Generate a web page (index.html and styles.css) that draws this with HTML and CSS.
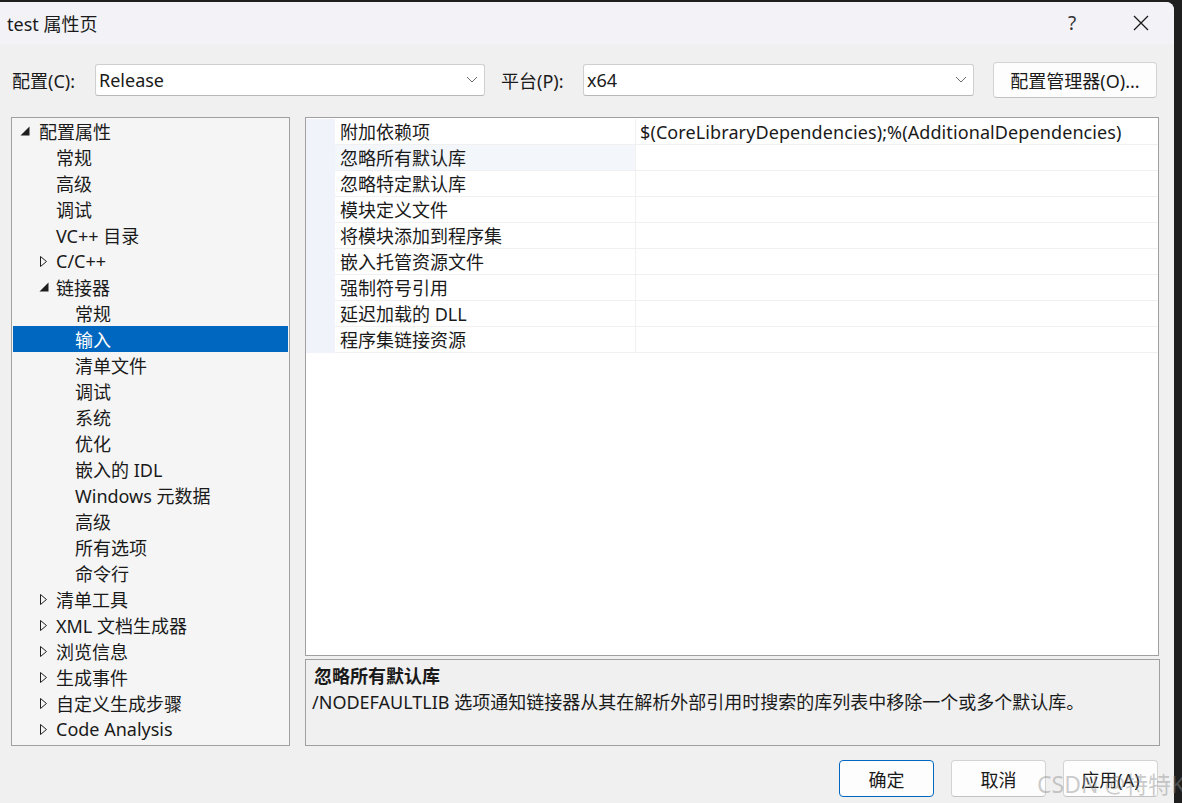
FILE: index.html
```html
<!DOCTYPE html>
<html lang="zh-CN">
<head>
    <meta charset="UTF-8">
    <meta name="viewport" content="width=device-width, initial-scale=1.0">
    <title>test 属性页</title>
    <link rel="stylesheet" href="styles.css">
</head>
<body>

<div class="window">

    <div class="titlebar">
        <span class="title">test 属性页</span>
        <span class="help">?</span>
        <span class="close">
            <svg width="16" height="16" viewBox="0 0 16 16"><path d="M1 1 L15 15 M15 1 L1 15" stroke="#1b1b1b" stroke-width="1.3" fill="none"/></svg>
        </span>
    </div>

    <div class="toolbar">
        <label class="lbl">配置(C):</label>
        <div class="combo combo-config">
            <span>Release</span>
            <svg class="chev" width="12" height="7" viewBox="0 0 12 7"><path d="M1 1 L6 6 L11 1" stroke="#6b6b6b" stroke-width="1" fill="none"/></svg>
        </div>
        <label class="lbl lbl-platform">平台(P):</label>
        <div class="combo combo-platform">
            <span>x64</span>
            <svg class="chev" width="12" height="7" viewBox="0 0 12 7"><path d="M1 1 L6 6 L11 1" stroke="#6b6b6b" stroke-width="1" fill="none"/></svg>
        </div>
        <button class="btn btn-manager">配置管理器(O)...</button>
    </div>

    <div class="main">
        <div class="tree">
            <div class="node l1"><span class="tw"><svg width="10" height="10" viewBox="0 0 10 10"><polygon points="9.5,0.5 9.5,9.5 0.5,9.5" fill="#1e1e1e"/></svg></span>配置属性</div>
            <div class="node l2"><span class="tw"></span>常规</div>
            <div class="node l2"><span class="tw"></span>高级</div>
            <div class="node l2"><span class="tw"></span>调试</div>
            <div class="node l2"><span class="tw"></span>VC++ 目录</div>
            <div class="node l2"><span class="tw"><svg class="closed" width="8" height="11" viewBox="0 0 8 11"><polygon points="0.5,0.5 6.5,5.5 0.5,10.5" fill="none" stroke="#1e1e1e" stroke-width="1"/></svg></span>C/C++</div>
            <div class="node l2"><span class="tw"><svg width="10" height="10" viewBox="0 0 10 10"><polygon points="9.5,0.5 9.5,9.5 0.5,9.5" fill="#1e1e1e"/></svg></span>链接器</div>
            <div class="node l3"><span class="tw"></span>常规</div>
            <div class="node l3 selected"><span class="tw"></span>输入</div>
            <div class="node l3"><span class="tw"></span>清单文件</div>
            <div class="node l3"><span class="tw"></span>调试</div>
            <div class="node l3"><span class="tw"></span>系统</div>
            <div class="node l3"><span class="tw"></span>优化</div>
            <div class="node l3"><span class="tw"></span>嵌入的 IDL</div>
            <div class="node l3"><span class="tw"></span>Windows 元数据</div>
            <div class="node l3"><span class="tw"></span>高级</div>
            <div class="node l3"><span class="tw"></span>所有选项</div>
            <div class="node l3"><span class="tw"></span>命令行</div>
            <div class="node l2"><span class="tw"><svg class="closed" width="8" height="11" viewBox="0 0 8 11"><polygon points="0.5,0.5 6.5,5.5 0.5,10.5" fill="none" stroke="#1e1e1e" stroke-width="1"/></svg></span>清单工具</div>
            <div class="node l2"><span class="tw"><svg class="closed" width="8" height="11" viewBox="0 0 8 11"><polygon points="0.5,0.5 6.5,5.5 0.5,10.5" fill="none" stroke="#1e1e1e" stroke-width="1"/></svg></span>XML 文档生成器</div>
            <div class="node l2"><span class="tw"><svg class="closed" width="8" height="11" viewBox="0 0 8 11"><polygon points="0.5,0.5 6.5,5.5 0.5,10.5" fill="none" stroke="#1e1e1e" stroke-width="1"/></svg></span>浏览信息</div>
            <div class="node l2"><span class="tw"><svg class="closed" width="8" height="11" viewBox="0 0 8 11"><polygon points="0.5,0.5 6.5,5.5 0.5,10.5" fill="none" stroke="#1e1e1e" stroke-width="1"/></svg></span>生成事件</div>
            <div class="node l2"><span class="tw"><svg class="closed" width="8" height="11" viewBox="0 0 8 11"><polygon points="0.5,0.5 6.5,5.5 0.5,10.5" fill="none" stroke="#1e1e1e" stroke-width="1"/></svg></span>自定义生成步骤</div>
            <div class="node l2"><span class="tw"><svg class="closed" width="8" height="11" viewBox="0 0 8 11"><polygon points="0.5,0.5 6.5,5.5 0.5,10.5" fill="none" stroke="#1e1e1e" stroke-width="1"/></svg></span>Code Analysis</div>
        </div>

        <div class="right">
            <div class="grid">
                <div class="row">
                    <div class="gutter"></div>
                    <div class="name">附加依赖项</div>
                    <div class="value">$(CoreLibraryDependencies);%(AdditionalDependencies)</div>
                </div>
                <div class="row">
                    <div class="gutter"></div>
                    <div class="name active">忽略所有默认库</div>
                    <div class="value"></div>
                </div>
                <div class="row">
                    <div class="gutter"></div>
                    <div class="name">忽略特定默认库</div>
                    <div class="value"></div>
                </div>
                <div class="row">
                    <div class="gutter"></div>
                    <div class="name">模块定义文件</div>
                    <div class="value"></div>
                </div>
                <div class="row">
                    <div class="gutter"></div>
                    <div class="name">将模块添加到程序集</div>
                    <div class="value"></div>
                </div>
                <div class="row">
                    <div class="gutter"></div>
                    <div class="name">嵌入托管资源文件</div>
                    <div class="value"></div>
                </div>
                <div class="row">
                    <div class="gutter"></div>
                    <div class="name">强制符号引用</div>
                    <div class="value"></div>
                </div>
                <div class="row">
                    <div class="gutter"></div>
                    <div class="name">延迟加载的 DLL</div>
                    <div class="value"></div>
                </div>
                <div class="row">
                    <div class="gutter"></div>
                    <div class="name">程序集链接资源</div>
                    <div class="value"></div>
                </div>
            </div>

            <div class="desc">
                <div class="desc-title">忽略所有默认库</div>
                <div class="desc-text">/NODEFAULTLIB 选项通知链接器从其在解析外部引用时搜索的库列表中移除一个或多个默认库。</div>
            </div>
        </div>
    </div>

    <div class="footer">
        <button class="btn btn-dlg btn-ok">确定</button>
        <button class="btn btn-dlg">取消</button>
        <button class="btn btn-dlg">应用(A)</button>
    </div>

</div>

<div class="watermark">CSDN @特特K</div>

</body>
</html>
```

FILE: styles.css
```css
body {
  margin: 0;
  background-color: #1f1f1f;
  font-family: "Noto Sans", "Noto Sans CJK SC", sans-serif;
  font-size: 18px;
  color: #1a1a1a;
  overflow: hidden;
}

.window {
  width: 1174px;
  height: 801px;
  margin-top: 2px;
  background-color: #f0f0f0;
  border-top-right-radius: 8px;
  overflow: hidden;
  position: relative;
}

.titlebar {
  height: 42px;
  background-color: #f3f3f7;
  display: flex;
  align-items: center;
}

.title {
  margin-left: 7px;
  flex: 1;
}

.help {
  width: 20px;
  text-align: center;
  font-size: 19px;
  color: #333;
  margin-right: 51px;
}

.close {
  display: flex;
  margin-right: 25px;
}

.toolbar {
  display: flex;
  align-items: center;
  height: 35px;
  margin-top: 18px;
  padding-left: 12px;
}

.lbl {
  width: 83px;
}

.lbl-platform {
  margin-left: 16px;
  width: 82px;
}

.combo {
  height: 30px;
  background-color: #ffffff;
  border: 1px solid #cfcfcf;
  border-bottom-color: #b8b8b8;
  border-radius: 3px;
  display: flex;
  align-items: center;
  justify-content: space-between;
  padding-left: 3px;
  padding-right: 6px;
  box-sizing: content-box;
}

.combo-config {
  width: 379px;
}

.combo-platform {
  width: 380px;
}

.btn {
  font-family: "Noto Sans", "Noto Sans CJK SC", sans-serif;
  font-size: 18px;
  color: #1a1a1a;
  background-color: #fdfdfd;
  border: 1px solid #d3d3d3;
  border-bottom-color: #c2c2c2;
  border-radius: 4px;
  padding: 0;
}

.btn-manager {
  width: 164px;
  height: 36px;
  margin-left: 19px;
}

.main {
  display: flex;
  margin-top: 20px;
  padding-left: 11px;
  gap: 15px;
}

.tree {
  width: 276px;
  height: 627px;
  border: 1px solid #a0a0a0;
  background-color: #f5f5f5;
  padding: 0 0 0 1px;
  box-sizing: content-box;
}

.node {
  display: flex;
  align-items: center;
  height: 26px;
  margin-right: 1px;
  white-space: nowrap;
}

.tw {
  width: 19px;
  display: flex;
  align-items: center;
}

.l1 {
  padding-left: 7px;
}

.l2 {
  padding-left: 24px;
}

.l2 .tw svg {
  margin-left: 2px;
}

.l2 .tw svg.closed {
  margin-left: 3px;
}

.l3 {
  padding-left: 43px;
}

.selected {
  background-color: #0067c0;
  color: #ffffff;
}

.right {
  display: flex;
  flex-direction: column;
  gap: 3px;
}

.grid {
  width: 852px;
  height: 536px;
  background-color: #ffffff;
  border: 1px solid #a0a0a0;
  padding-top: 1px;
}

.row {
  display: flex;
  height: 26px;
}

.gutter {
  width: 29px;
  background-color: #f0f4fa;
}

.name {
  width: 295px;
  padding-left: 5px;
  border-bottom: 1px solid #f0f0f0;
  border-right: 1px solid #f0f0f0;
  line-height: 26px;
  white-space: nowrap;
}

.name.active {
  background-color: #f3f6fb;
}

.value {
  flex: 1;
  padding-left: 4px;
  border-bottom: 1px solid #f0f0f0;
  line-height: 26px;
  white-space: nowrap;
  letter-spacing: 0.1px;
}

.desc {
  width: 838px;
  height: 72px;
  border: 1px solid #a0a0a0;
  padding: 3px 7px 10px 8px;
}

.desc-title {
  font-weight: bold;
  line-height: 26px;
}

.desc-text {
  line-height: 27px;
  margin-left: -2px;
  white-space: nowrap;
}

.footer {
  display: flex;
  justify-content: flex-end;
  gap: 17px;
  margin-top: 14px;
  padding-right: 16px;
}

.btn-dlg {
  width: 95px;
  height: 37px;
}

.btn-ok {
  border: 1px solid #0067c0;
}

.watermark {
  position: absolute;
  left: 1037px;
  top: 766px;
  font-family: "Noto Sans", "Noto Sans CJK SC", sans-serif;
  font-size: 23px;
  color: rgba(140, 140, 140, 0.45);
  white-space: nowrap;
  pointer-events: none;
}
```
